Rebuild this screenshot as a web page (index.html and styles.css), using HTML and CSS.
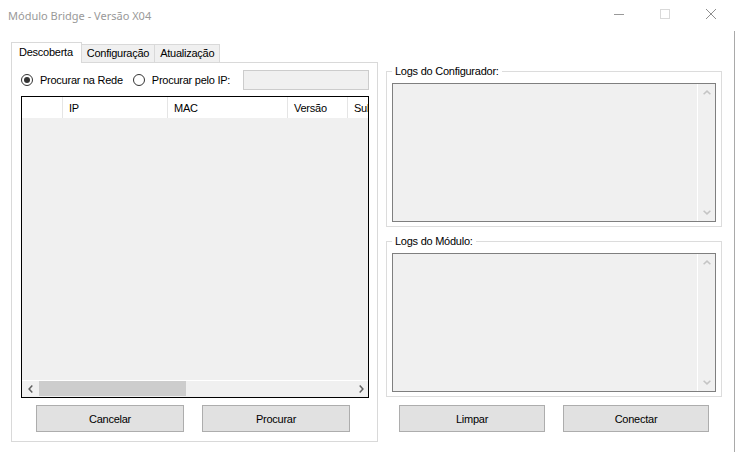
FILE: index.html
```html
<!DOCTYPE html>
<html lang="pt-BR">
<head>
    <meta charset="UTF-8">
    <meta name="viewport" content="width=device-width, initial-scale=1.0">
    <title>Módulo Bridge - Versão X04</title>
    <link rel="stylesheet" href="styles.css">
</head>
<body>
    <div class="window">
        <div class="titlebar">
            <span class="title">Módulo Bridge - Versão X04</span>
            <div class="caption-buttons">
                <span class="caption-btn">
                    <svg width="10" height="10" viewBox="0 0 10 10"><line x1="0" y1="5.5" x2="10" y2="5.5" stroke="#999" stroke-width="1"/></svg>
                </span>
                <span class="caption-btn">
                    <svg width="10" height="10" viewBox="0 0 10 10"><rect x="0.5" y="0.5" width="9" height="9" fill="none" stroke="#d9d9d9" stroke-width="1"/></svg>
                </span>
                <span class="caption-btn">
                    <svg width="10" height="10" viewBox="0 0 10 10"><path d="M0 0 L10 10 M10 0 L0 10" stroke="#8f8f8f" stroke-width="1"/></svg>
                </span>
            </div>
        </div>

        <div class="client">
            <!-- Tab control -->
            <div class="tabcontrol">
                <div class="tabstrip">
                    <div class="tab active">Descoberta</div>
                    <div class="tab">Configuração</div>
                    <div class="tab">Atualização</div>
                </div>
                <div class="tabpage">
                    <div class="search-row">
                        <label class="option"><span class="radio checked"></span>Procurar na Rede</label>
                        <label class="option"><span class="radio"></span>Procurar pelo IP:</label>
                        <input type="text" class="ip-input" disabled>
                    </div>

                    <div class="listview">
                        <div class="lv-header">
                            <div class="col col-first"></div>
                            <div class="col col-ip">IP</div>
                            <div class="col col-mac">MAC</div>
                            <div class="col col-version">Versão</div>
                            <div class="col col-last">Subrede</div>
                        </div>
                        <div class="lv-body"></div>
                        <div class="hscroll">
                            <span class="scroll-arrow">
                                <svg width="5" height="8" viewBox="0 0 5 8"><path d="M4.3 0.6 L1.1 4 L4.3 7.4" fill="none" stroke="#606060" stroke-width="1.5"/></svg>
                            </span>
                            <div class="track"><div class="thumb"></div></div>
                            <span class="scroll-arrow right">
                                <svg width="5" height="8" viewBox="0 0 5 8"><path d="M0.7 0.6 L3.9 4 L0.7 7.4" fill="none" stroke="#606060" stroke-width="1.5"/></svg>
                            </span>
                        </div>
                    </div>

                    <div class="button-row page-buttons">
                        <button class="btn">Cancelar</button>
                        <button class="btn">Procurar</button>
                    </div>
                </div>
            </div>

            <!-- Logs -->
            <div class="logs">
                <fieldset class="group">
                    <legend>Logs do Configurador:</legend>
                    <div class="logbox">
                        <div class="log-text"></div>
                        <div class="vscroll">
                            <span class="scroll-arrow">
                                <svg width="8" height="5" viewBox="0 0 8 5"><path d="M0.6 4.3 L4 1.1 L7.4 4.3" fill="none" stroke="#c4c4c4" stroke-width="1.5"/></svg>
                            </span>
                            <span class="scroll-arrow">
                                <svg width="8" height="5" viewBox="0 0 8 5"><path d="M0.6 0.7 L4 3.9 L7.4 0.7" fill="none" stroke="#c4c4c4" stroke-width="1.5"/></svg>
                            </span>
                        </div>
                    </div>
                </fieldset>

                <fieldset class="group">
                    <legend>Logs do Módulo:</legend>
                    <div class="logbox">
                        <div class="log-text"></div>
                        <div class="vscroll">
                            <span class="scroll-arrow">
                                <svg width="8" height="5" viewBox="0 0 8 5"><path d="M0.6 4.3 L4 1.1 L7.4 4.3" fill="none" stroke="#c4c4c4" stroke-width="1.5"/></svg>
                            </span>
                            <span class="scroll-arrow">
                                <svg width="8" height="5" viewBox="0 0 8 5"><path d="M0.6 0.7 L4 3.9 L7.4 0.7" fill="none" stroke="#c4c4c4" stroke-width="1.5"/></svg>
                            </span>
                        </div>
                    </div>
                </fieldset>

                <div class="button-row log-buttons">
                    <button class="btn small">Limpar</button>
                    <button class="btn small">Conectar</button>
                </div>
            </div>
        </div>
    </div>
</body>
</html>
```

FILE: styles.css
```css
/* Global Styles */
* {
    box-sizing: border-box;
}

body {
    margin: 0;
    background: #fff;
    font-family: "Liberation Sans", Arial, sans-serif;
    font-size: 11px;
    letter-spacing: -0.25px;
    color: #000;
}

.window {
    width: 736px;
    height: 452px;
    overflow: hidden;
    background: #fff;
}

/* Title bar */
.titlebar {
    display: flex;
    height: 31px;
}

.title {
    font-family: "Noto Sans", sans-serif;
    font-size: 11px;
    letter-spacing: 0;
    line-height: 31px;
    color: #999;
    padding-left: 8px;
}

.caption-buttons {
    margin-left: auto;
    display: flex;
    padding-right: 2px;
}

.caption-btn {
    width: 46px;
    height: 28px;
    display: flex;
    align-items: center;
    justify-content: center;
}

.caption-btn svg {
    display: block;
}

/* Client area */
.client {
    display: flex;
    gap: 8px;
    width: 735px;
    height: 421px;
    padding: 11px 0 0 11px;
    border-right: 1px solid #a9a9a9;
}

/* Tabs */
.tabcontrol {
    width: 367px;
}

.tabstrip {
    display: flex;
    align-items: flex-end;
    height: 20px;
}

.tab {
    height: 18px;
    padding: 0 5px;
    border: 1px solid #d9d9d9;
    border-bottom: none;
    background: #f0f0f0;
    line-height: 16px;
    white-space: nowrap;
}

.tab + .tab {
    margin-left: -1px;
}

.tab.active {
    height: 21px;
    margin-bottom: -1px;
    padding: 0 8px 0 7px;
    background: #fff;
    line-height: 18px;
    position: relative;
    z-index: 1;
}

.tabpage {
    height: 380px;
    border: 1px solid #d9d9d9;
    background: #fff;
    padding: 7px 8px 0 9px;
}

.search-row {
    display: flex;
    align-items: center;
    height: 20px;
}

.option {
    display: flex;
    align-items: center;
    gap: 7px;
    white-space: nowrap;
}

.option + .option {
    margin-left: 10px;
}

.radio {
    width: 12px;
    height: 12px;
    border: 1px solid #333;
    border-radius: 50%;
    display: flex;
    align-items: center;
    justify-content: center;
}

.radio.checked::after {
    content: "";
    width: 6px;
    height: 6px;
    border-radius: 50%;
    background: #333;
}

.ip-input {
    margin: 0 0 0 auto;
    width: 126px;
    height: 20px;
    padding: 0;
    border: 1px solid #cccccc;
    background: #f0f0f0;
}

/* List view */
.listview {
    margin-top: 6px;
    height: 302px;
    border: 1px solid #000;
    background: #f0f0f0;
    display: flex;
    flex-direction: column;
}

.lv-header {
    display: flex;
    height: 21px;
    background: #fff;
}

.col {
    padding: 2px 0 0 6px;
    line-height: 18px;
    border-right: 1px solid #e5e5e5;
    white-space: nowrap;
    overflow: hidden;
}

.col-first {
    width: 41px;
}

.col-ip {
    width: 105px;
}

.col-mac {
    width: 120px;
}

.col-version {
    width: 60px;
}

.col-last {
    flex: 1;
    border-right: none;
}

.lv-body {
    flex: 1;
}

.hscroll {
    display: flex;
    height: 17px;
    border-top: 1px solid #fff;
    background: #f0f0f0;
}

.scroll-arrow {
    width: 17px;
    display: flex;
    align-items: center;
    justify-content: center;
}

.scroll-arrow svg {
    display: block;
}

.hscroll .scroll-arrow.right {
    justify-content: flex-end;
    padding-right: 4px;
}

.track {
    flex: 1;
}

.thumb {
    width: 147px;
    height: 15px;
    background: #cdcdcd;
}

/* Buttons */
.button-row {
    display: flex;
    gap: 18px;
}

.page-buttons {
    margin: 7px 0 0 15px;
}

.log-buttons {
    margin: 8px 0 0 13px;
}

.btn {
    width: 148px;
    height: 27px;
    padding: 0;
    border: 1px solid #adadad;
    background: #e1e1e1;
    font: inherit;
    letter-spacing: inherit;
    color: #000;
}

.btn.small {
    width: 146px;
}

/* Log group boxes */
.logs {
    width: 336px;
    padding-top: 23px;
    display: flex;
    flex-direction: column;
}

.group {
    margin: 0;
    padding: 5px 5px 4px;
    border: 1px solid #dcdcdc;
    min-width: 0;
}

.group + .group {
    margin-top: 8px;
}

.group legend {
    padding: 0 3px;
    line-height: 13px;
}

.logbox {
    height: 139px;
    border: 1px solid #7f7f7f;
    background: #f0f0f0;
    display: flex;
}

.log-text {
    flex: 1;
}

.vscroll {
    width: 18px;
    border-left: 1px solid #fff;
    display: flex;
    flex-direction: column;
    justify-content: space-between;
}

.vscroll .scroll-arrow {
    height: 17px;
}
```
